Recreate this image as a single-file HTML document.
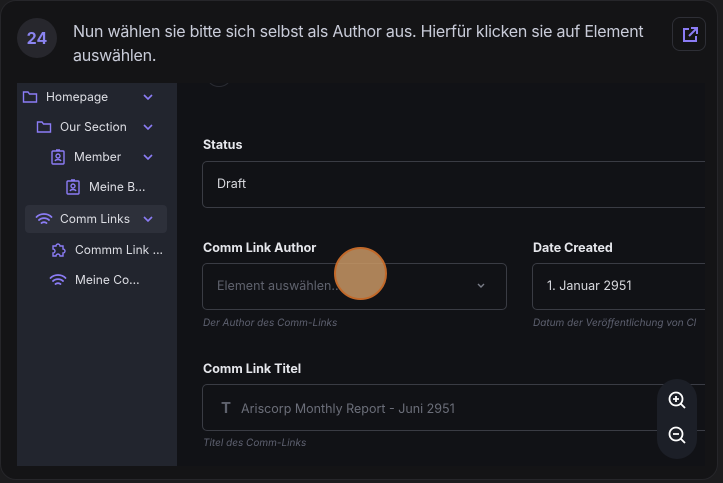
<!DOCTYPE html>
<html><head><meta charset="utf-8"><style>
*{margin:0;padding:0;box-sizing:border-box}
body{width:723px;height:483px;background:#1c1c1e;font-family:"Inter","Liberation Sans",sans-serif;overflow:hidden;position:relative}
.card{position:absolute;left:0;top:0;width:718px;height:480px;background:#141416;border:1px solid #26262a;border-radius:16px;overflow:hidden}
.badge{position:absolute;left:16px;top:17px;width:40px;height:40px;border-radius:50%;background:#27272d;color:#8b84f0;font-weight:bold;font-size:16px;text-align:center;line-height:40px}
.title{position:absolute;left:72px;top:18px;width:620px;color:#c9ccd9;font-size:16px;line-height:24px;letter-spacing:-0.25px}
.ext{position:absolute;left:671px;top:16px;width:34px;height:34px;border:1px solid #2e2f36;border-radius:8px}
.shot{position:absolute;left:16px;top:82px;width:688px;height:383px;background:#111216;overflow:hidden}
.side{position:absolute;left:0;top:0;width:160px;height:383px;background:#22252e}
.it{position:absolute;height:28px;color:#dcdde3;font-size:12px;line-height:28px;white-space:nowrap}
.it svg{position:absolute;top:6px}
.chev{position:absolute;left:125px;top:8px}
.sel{position:absolute;left:8px;top:122px;width:142px;height:28px;background:#2d303a;border-radius:4px}
.lbl{position:absolute;color:#e6e7ec;font-size:12.5px;font-weight:bold}
.inp{position:absolute;border:1px solid #3a3c44;border-radius:5px;height:47px;color:#d8d9de;font-size:12.5px;line-height:45px;padding-left:14px}
.hint{position:absolute;color:#5e6170;font-size:10px;font-style:italic}
</style></head><body>
<div class="card">
<div class="badge">24</div>
<div class="title">Nun wählen sie bitte sich selbst als Author aus. Hierfür klicken sie auf Element<br>auswählen.</div>
<div class="ext"><svg width="34" height="34" viewBox="0 0 34 34" fill="none" stroke="#8b7cf5" stroke-width="2"><path d="M16 11h-5v12h12v-5"/><path d="M18 10h6v6M24 10l-8 8"/></svg></div>
<div class="shot">
 <div class="side">
  <div class="sel"></div>
  <div class="it" style="left:5px;top:0"><svg width="16" height="16" viewBox="0 0 16 16" fill="none" stroke="#8b7cf5" stroke-width="1.4"><path d="M1.5 3h4.5l1.5 2h7v8h-13z"/></svg><span style="margin-left:24px">Homepage</span></div>
  <div class="it" style="left:19px;top:30px"><svg width="16" height="16" viewBox="0 0 16 16" fill="none" stroke="#8b7cf5" stroke-width="1.4"><path d="M1.5 3h4.5l1.5 2h7v8h-13z"/></svg><span style="margin-left:24px">Our Section</span></div>
  <div class="it" style="left:33px;top:60px"><svg width="16" height="16" viewBox="0 0 16 16" fill="none" stroke="#8b7cf5" stroke-width="1.4"><rect x="2" y="2" width="12" height="13" rx="1"/><circle cx="8" cy="7" r="2"/><path d="M5 12c1-2 5-2 6 0M6 1h4"/></svg><span style="margin-left:24px">Member</span></div>
  <div class="it" style="left:48px;top:90px"><svg width="16" height="16" viewBox="0 0 16 16" fill="none" stroke="#8b7cf5" stroke-width="1.4"><rect x="2" y="2" width="12" height="13" rx="1"/><circle cx="8" cy="7" r="2"/><path d="M5 12c1-2 5-2 6 0M6 1h4"/></svg><span style="margin-left:24px">Meine B...</span></div>
  <div class="it" style="left:18px;top:122px"><svg width="18" height="16" viewBox="0 0 18 16" fill="none" stroke="#8b7cf5" stroke-width="1.8" stroke-linecap="round"><path d="M1.5 6c4-4 11-4 15 0M4 9c3-2.5 7-2.5 10 0M6.5 12c1.5-1 3.5-1 5 0"/></svg><span style="margin-left:25px">Comm Links</span></div>
  <div class="it" style="left:33px;top:153px"><svg width="16" height="16" viewBox="0 0 16 16" fill="none" stroke="#8b7cf5" stroke-width="1.4"><path d="M3 4h3a2 2 0 1 1 4 0h3v3a2 2 0 1 1 0 4v3H10a2 2 0 1 0-4 0H3v-3a2 2 0 1 0 0-4z"/></svg><span style="margin-left:25px">Commm Link ...</span></div>
  <div class="it" style="left:32px;top:183px"><svg width="18" height="16" viewBox="0 0 18 16" fill="none" stroke="#8b7cf5" stroke-width="1.8" stroke-linecap="round"><path d="M1.5 6c4-4 11-4 15 0M4 9c3-2.5 7-2.5 10 0M6.5 12c1.5-1 3.5-1 5 0"/></svg><span style="margin-left:26px">Meine Co...</span></div>
  <svg class="chev" style="top:9px" width="12" height="10" viewBox="0 0 12 10" fill="none" stroke="#8b7cf5" stroke-width="1.6"><path d="M2 3l4 4 4-4"/></svg>
  <svg class="chev" style="top:39px" width="12" height="10" viewBox="0 0 12 10" fill="none" stroke="#8b7cf5" stroke-width="1.6"><path d="M2 3l4 4 4-4"/></svg>
  <svg class="chev" style="top:69px" width="12" height="10" viewBox="0 0 12 10" fill="none" stroke="#8b7cf5" stroke-width="1.6"><path d="M2 3l4 4 4-4"/></svg>
  <svg class="chev" style="top:131px" width="12" height="10" viewBox="0 0 12 10" fill="none" stroke="#8b7cf5" stroke-width="1.6"><path d="M2 3l4 4 4-4"/></svg>
 </div>
 <div style="position:absolute;left:190px;top:-16px;width:24px;height:20px;border-radius:50%;border:1px solid #2a2c33"></div>
 <div class="lbl" style="left:186px;top:55px">Status</div>
 <div class="inp" style="left:185px;top:78px;width:520px">Draft</div>
 <div class="lbl" style="left:186px;top:158px">Comm Link Author</div>
 <div class="inp" style="left:185px;top:180px;width:305px;color:#5f626d">Element auswählen...
  <svg style="position:absolute;left:273px;top:18px" width="10" height="8" viewBox="0 0 10 8" fill="none" stroke="#7a7d88" stroke-width="1.4"><path d="M2 2l3 3 3-3"/></svg></div>
 <div class="hint" style="left:186px;top:234px">Der Author des Comm-Links</div>
 <div class="lbl" style="left:516px;top:158px">Date Created</div>
 <div class="inp" style="left:515px;top:180px;width:200px">1. Januar 2951</div>
 <div class="hint" style="left:516px;top:234px;white-space:nowrap">Datum der Veröffentlichung von Cl</div>
 <div class="lbl" style="left:186px;top:279px">Comm Link Titel</div>
 <div class="inp" style="left:185px;top:301px;width:520px;color:#6b6e79"><span style="font-weight:bold;font-size:15px;color:#5f626d;margin-right:10px;margin-left:4px">T</span>Ariscorp Monthly Report - Juni 2951</div>
 <div class="hint" style="left:186px;top:354px">Titel des Comm-Links</div>
 <div style="position:absolute;left:640px;top:296px;width:40px;height:80px;border-radius:20px;background:#1c1f27"></div>
 <svg style="position:absolute;left:650px;top:307px" width="20" height="20" viewBox="0 0 20 20" fill="none" stroke="#fff" stroke-width="1.8"><circle cx="9" cy="9" r="6.5"/><path d="M14 14l4 4M9 6v6M6 9h6"/></svg>
 <svg style="position:absolute;left:650px;top:342px" width="20" height="20" viewBox="0 0 20 20" fill="none" stroke="#fff" stroke-width="1.8"><circle cx="9" cy="9" r="6.5"/><path d="M14 14l4 4M6 9h6"/></svg>
 <div style="position:absolute;left:317px;top:164px;width:53px;height:53px;border-radius:50%;background:rgba(200,150,100,0.85);border:2px solid #c2692a"></div>
</div>
</div>
</body></html>
